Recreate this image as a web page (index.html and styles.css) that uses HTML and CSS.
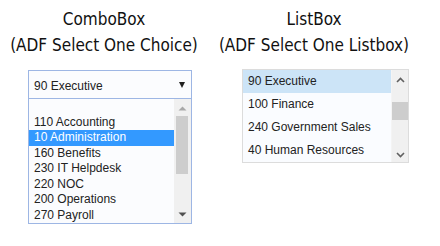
FILE: index.html
```html
<!DOCTYPE html>
<html lang="en">
<head>
    <meta charset="UTF-8">
    <meta name="viewport" content="width=device-width, initial-scale=1.0">
    <title>ComboBox and ListBox</title>
    <link rel="stylesheet" href="styles.css">
</head>
<body>
    <div class="page">
        <div class="column column-combo">
            <h2 class="title">ComboBox<br>(ADF Select One Choice)</h2>

            <div class="combo">
                <div class="combo-field">
                    <span>90 Executive</span>
                    <span class="combo-arrow"></span>
                </div>
                <div class="dropdown">
                    <ul class="options">
                        <li class="option"></li>
                        <li class="option">110 Accounting</li>
                        <li class="option selected">10 Administration</li>
                        <li class="option">160 Benefits</li>
                        <li class="option">230 IT Helpdesk</li>
                        <li class="option">220 NOC</li>
                        <li class="option">200 Operations</li>
                        <li class="option">270 Payroll</li>
                    </ul>
                    <div class="scrollbar scrollbar-combo">
                        <svg class="arrow" width="9" height="5" viewBox="0 0 9 5"><path d="M0.5 4.5 L4.5 0.5 L8.5 4.5 Z" fill="#a8a8a8"/></svg>
                        <div class="track"><div class="thumb thumb-combo"></div></div>
                        <svg class="arrow" width="9" height="5" viewBox="0 0 9 5"><path d="M0.5 0.5 L4.5 4.5 L8.5 0.5 Z" fill="#505050"/></svg>
                    </div>
                </div>
            </div>
        </div>

        <div class="column column-list">
            <h2 class="title">ListBox<br>(ADF Select One Listbox)</h2>

            <div class="listbox">
                <ul class="items">
                    <li class="item selected">90 Executive</li>
                    <li class="item">100 Finance</li>
                    <li class="item">240 Government Sales</li>
                    <li class="item">40 Human Resources</li>
                </ul>
                <div class="scrollbar scrollbar-list">
                    <svg class="chevron" width="9" height="6" viewBox="0 0 9 6"><path d="M1 5 L4.5 1.5 L8 5" fill="none" stroke="#606060" stroke-width="1.6"/></svg>
                    <div class="track"><div class="thumb thumb-list"></div></div>
                    <svg class="chevron" width="9" height="6" viewBox="0 0 9 6"><path d="M1 1 L4.5 4.5 L8 1" fill="none" stroke="#606060" stroke-width="1.6"/></svg>
                </div>
            </div>
        </div>
    </div>
</body>
</html>
```

FILE: styles.css
```css
body {
    margin: 0;
    background-color: #ffffff;
    font-family: "Liberation Sans", Arial, sans-serif;
    font-size: 12px;
    color: #222222;
}
.page {
    display: flex;
    padding-top: 6px;
}
.column {
    display: flex;
    flex-direction: column;
}
.column-combo {
    width: 208px;
}
.column-list {
    width: 212px;
}
.title {
    margin: 0;
    text-align: center;
    white-space: nowrap;
    font-family: "DejaVu Sans", sans-serif;
    font-stretch: condensed;
    font-weight: normal;
    font-size: 17px;
    line-height: 26px;
    color: #111111;
}
.column-combo .combo {
    margin: 12px 0 0 28px;
}
.column-list .listbox {
    margin: 11px 0 0 34px;
}

/* combo box */
.combo {
    width: 164px;
}
.combo-field {
    display: flex;
    align-items: center;
    justify-content: space-between;
    height: 26px;
    padding: 1px 5px 0 5px;
    border: 1px solid #9db6e4;
    background-color: #fbfcfe;
    box-sizing: content-box;
}
.combo-field span:first-child {
    margin-top: 1px;
}
.combo-arrow {
    width: 0;
    height: 0;
    margin-right: 1px;
    border-left: 3.5px solid transparent;
    border-right: 3.5px solid transparent;
    border-top: 6px solid #202020;
}
.dropdown {
    display: flex;
    height: 124px;
    border: 1px solid #9db6e4;
    border-top: none;
    background-color: #fbfcfe;
    overflow: hidden;
}
.options {
    flex: 1;
    margin: 0;
    padding: 0;
    list-style: none;
}
.option {
    height: 15.5px;
    line-height: 15.5px;
    padding-left: 5px;
    white-space: nowrap;
}
.option.selected {
    background-color: #3399ff;
    color: #ffffff;
}

/* scrollbars */
.scrollbar {
    display: flex;
    flex-direction: column;
    align-items: center;
    background-color: #f0f0f0;
}
.scrollbar-combo {
    width: 17px;
    padding: 7px 0 6px;
}
.scrollbar-list {
    width: 16px;
    padding: 7px 0 4px;
    border-left: 1px solid #f4f4f4;
}
.track {
    flex: 1;
    align-self: stretch;
    position: relative;
}
.thumb {
    position: absolute;
    background-color: #cdcdcd;
}
.thumb-combo {
    top: 5px;
    left: 2px;
    right: 3px;
    height: 58px;
}
.thumb-list {
    top: 19px;
    left: 0;
    right: 0;
    height: 18px;
}

/* list box */
.listbox {
    display: flex;
    width: 165px;
    height: 92px;
    border: 1px solid #dcdcdc;
    background-color: #fafcff;
}
.items {
    flex: 1;
    margin: 0;
    padding: 0;
    list-style: none;
}
.item {
    height: 23px;
    line-height: 23px;
    padding-left: 5px;
    white-space: nowrap;
}
.item.selected {
    background-color: #cce4f7;
}
```
